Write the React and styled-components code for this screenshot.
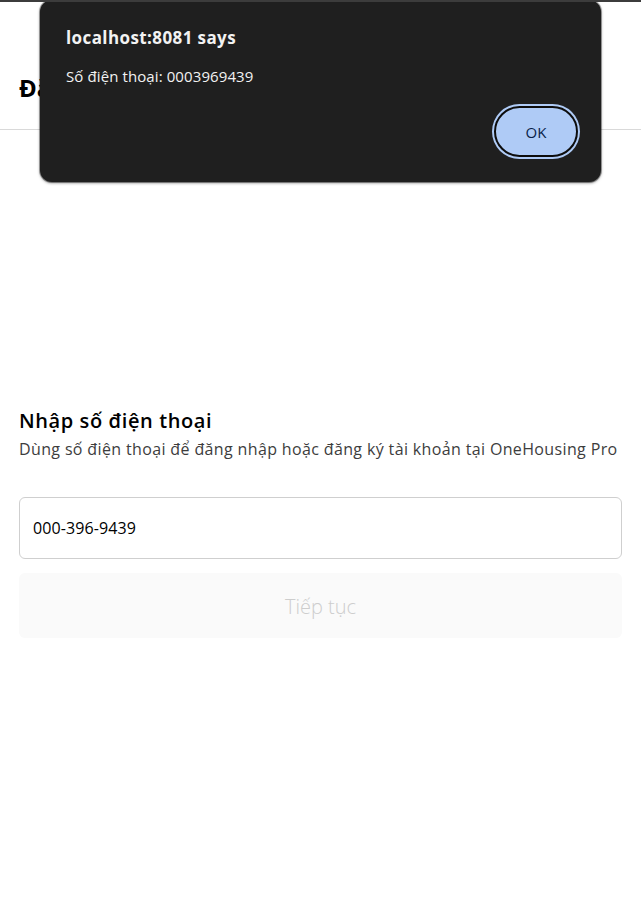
import React from "react";
import styled, { createGlobalStyle } from "styled-components";

const Global = createGlobalStyle`
  html, body { margin: 0; padding: 0; background: #fff; }
  body {
    font-family: "Open Sans", "Noto Sans", sans-serif;
    color: #111;
    border-top: 2px solid #3c3c3c;
  }
  * { box-sizing: border-box; }
`;

const Page = styled.div`
  position: relative;
  min-height: 910px;
  display: flex;
  flex-direction: column;
`;

const Header = styled.header`
  height: 128px;
  display: flex;
  align-items: center;
  padding: 44px 19px 0 19px;
  border-bottom: 1px solid #d9d9d9;
`;

const HeaderTitle = styled.h1`
  margin: 0;
  font-size: 24px;
  font-weight: 700;
  color: #000;
`;

const Content = styled.main`
  padding: 277px 19px 0 19px;
  display: flex;
  flex-direction: column;
`;

const Title = styled.h2`
  margin: 0;
  font-size: 20px;
  font-weight: 600;
  line-height: 28px;
  letter-spacing: 0.6px;
  color: #000;
`;

const Subtitle = styled.p`
  margin: 0;
  padding-top: 2px;
  font-size: 16px;
  line-height: 24px;
  color: #3d3d3d;
  letter-spacing: 0.36px;
`;

const Input = styled.input`
  margin-top: 36px;
  height: 62px;
  width: 100%;
  border: 1px solid #cfcfcf;
  border-radius: 6px;
  padding: 0 13px;
  font-family: inherit;
  font-size: 16px;
  color: #000;
  letter-spacing: 0.1px;
  outline: none;
`;

const Button = styled.button`
  margin-top: 14px;
  height: 65px;
  width: 100%;
  border: none;
  border-radius: 6px;
  background: #fafafa;
  color: #cdcdcd;
  font-family: inherit;
  font-size: 20px;
  font-weight: 300;
  padding-top: 3px;
`;

const Dialog = styled.div`
  position: absolute;
  left: 40px;
  top: -2px;
  width: 561px;
  height: 182px;
  background: #1f1f1f;
  border-radius: 12px;
  box-shadow: 0 1px 3px rgba(0,0,0,0.5), 0 0 0 1px rgba(0,0,0,0.3);
  padding: 26px 22px 0 26px;
  display: flex;
  flex-direction: column;
  color: #fff;
`;

const DialogTitle = styled.div`
  font-size: 17px;
  font-weight: 700;
  line-height: 24px;
  letter-spacing: 0.4px;
  color: #f2f2f2;
`;

const DialogMsg = styled.div`
  margin-top: 16px;
  font-size: 15px;
  line-height: 20px;
  letter-spacing: 0.1px;
  color: #f2f2f2;
`;

const Actions = styled.div`
  margin-top: 20px;
  display: flex;
  justify-content: flex-end;
`;

const OkButton = styled.button`
  width: 84px;
  height: 51px;
  margin-right: 1px;
  border-radius: 26px;
  background: #afcbf6;
  border: 2.5px solid #0d0d0d;
  box-shadow: 0 0 0 2px #afcbf6;
  color: #0a1f4a;
  font-family: inherit;
  font-size: 15px;
  font-weight: 500;
`;

export default function App() {
  return (
    <>
      <Global />
      <Page>
        <Header>
          <HeaderTitle>Đăng nhập</HeaderTitle>
        </Header>
        <Content>
          <Title>Nhập số điện thoại</Title>
          <Subtitle>Dùng số điện thoại để đăng nhập hoặc đăng ký tài khoản tại OneHousing Pro</Subtitle>
          <Input defaultValue="000-396-9439" />
          <Button disabled>Tiếp tục</Button>
        </Content>
        <Dialog role="alertdialog">
          <DialogTitle>localhost:8081 says</DialogTitle>
          <DialogMsg>Số điện thoại: 0003969439</DialogMsg>
          <Actions>
            <OkButton>OK</OkButton>
          </Actions>
        </Dialog>
      </Page>
    </>
  );
}
